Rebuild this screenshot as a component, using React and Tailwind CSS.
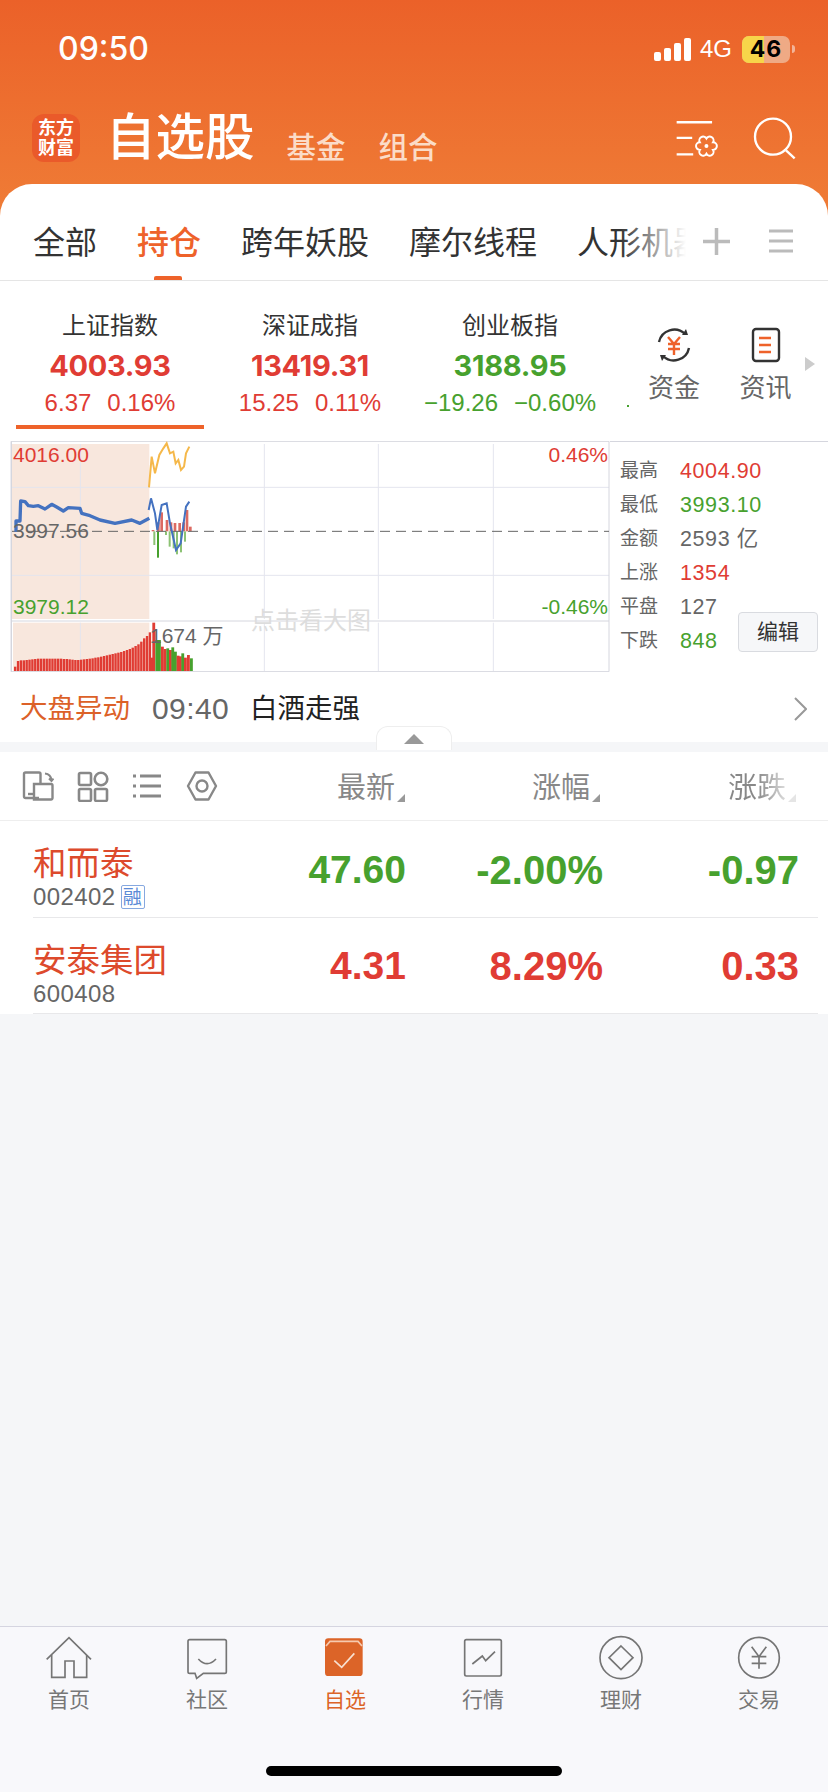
const RED = "text-[#e03c34]";
const GREEN = "text-[#47a12e]";

const tabs = ["全部", "持仓", "跨年妖股", "摩尔线程", "人形机器人"];

const indexes = [
  { name: "上证指数", value: "4003.93", a: "6.37", b: "0.16%", color: RED, active: true },
  { name: "深证成指", value: "13419.31", a: "15.25", b: "0.11%", color: RED },
  { name: "创业板指", value: "3188.95", a: "−19.26", b: "−0.60%", color: GREEN },
];

const stats = [
  { label: "最高", value: "4004.90", color: RED },
  { label: "最低", value: "3993.10", color: GREEN },
  { label: "金额", value: "2593 亿", color: "text-[#666]" },
  { label: "上涨", value: "1354", color: RED },
  { label: "平盘", value: "127", color: "text-[#666]" },
  { label: "下跌", value: "848", color: GREEN },
];

const stocks = [
  { name: "和而泰", code: "002402", tag: true, price: "47.60", pct: "-2.00%", diff: "-0.97", color: GREEN },
  { name: "安泰集团", code: "600408", price: "4.31", pct: "8.29%", diff: "0.33", color: RED },
];

// 图表坐标都是 3 倍的
const bluePre = "48,290 48,258 60,258 62,198 75,200 85,212 100,214 115,212 135,222 155,208 170,216 190,228 205,218 240,220 245,235 270,242 300,255 345,265 395,255 420,265 448,250";
const blueNow = "446,225 453,190 465,235 472,285 485,210 500,205 510,265 528,345 542,325 558,215 568,200";
const yellow = "447,157 455,65 465,115 478,60 490,40 500,25 510,55 520,50 527,85 535,75 543,105 552,95 558,55 568,35";

const upBars = [[458, 285], [474, 262], [484, 232], [500, 255], [512, 262], [524, 264], [538, 264], [550, 262], [560, 225], [570, 275]];
const downBars = [[462, 330], [473, 368], [497, 300], [508, 335], [520, 340], [530, 358], [542, 352], [554, 320]];

const volPre = [695, 678, 676, 676, 675, 674, 673, 672, 671, 671, 671, 671, 671, 671, 671, 671, 671, 672, 672, 673, 674, 675, 675, 674, 673, 672, 671, 670, 668, 667, 665, 663, 661, 659, 657, 655, 653, 651, 648, 645, 642, 638, 633, 628, 620, 610, 603, 592];
const volNow = [
  [452, 668, "#e03c34"], [457, 563, "#e03c34"], [466, 615, "#47a12e"], [474, 615, "#47a12e"], [483, 635, "#e03c34"],
  [491, 642, "#e03c34"], [499, 640, "#47a12e"], [507, 645, "#e03c34"], [514, 637, "#47a12e"], [522, 650, "#47a12e"],
  [530, 662, "#e03c34"], [537, 664, "#e03c34"], [544, 655, "#47a12e"], [552, 668, "#e03c34"], [561, 660, "#e03c34"], [570, 670, "#47a12e"],
];

function Chart() {
  return (
    <svg className="block w-[610px] h-[231px]" viewBox="0 18 1830 693">
      <rect x="36" y="27" width="412" height="525" fill="#f8e7dd" />
      <rect x="39" y="563" width="409" height="145" fill="#f8e7dd" />
      <g stroke="#e4e5ee" strokeWidth="3">
        <path d="M36 157H1827M36 421H1827" />
        <path d="M241 27V552M793 27V552M1135 27V552M1480 27V552" />
        <path d="M241 563V708M793 563V708M1135 563V708M1480 563V708" />
      </g>
      <g stroke="#d5d6de" strokeWidth="3" fill="none">
        <path d="M34 19H1827V710H34ZM34 558H1827" />
      </g>
      <path d="M34 19V710" stroke="#d5d6de" strokeWidth="4" />
      {upBars.map(([x, y]) => (
        <rect key={x} x={x - 3} y={y} width="8" height={289 - y} fill="#dc6a62" />
      ))}
      {downBars.map(([x, y]) => (
        <rect key={x} x={x - 2} y="289" width="6" height={y - 289} fill={x === 473 ? "#47a12e" : "#8cc274"} />
      ))}
      <path d="M36 289H1827" stroke="#666" strokeWidth="3" strokeDasharray="30 18" />
      <polyline points={yellow} fill="none" stroke="#f5b84a" strokeWidth="6" />
      <polyline points={bluePre} fill="none" stroke="#4472c0" strokeWidth="10" strokeLinejoin="round" />
      <polyline points={blueNow} fill="none" stroke="#4472c0" strokeWidth="6" />
      {volPre.map((y, i) => (
        <rect key={i} x={42 + i * 8.6} y={y} width="7.2" height={708 - y} fill="#e03c34" />
      ))}
      {volNow.map(([x, y, c]) => (
        <rect key={x} x={x} y={y} width="8.5" height={708 - y} fill={c} />
      ))}
    </svg>
  );
}

function SettingIcon() {
  return (
    <svg className="w-[48px] h-[42px]" viewBox="130 290 145 125" fill="none" stroke="#fff" strokeWidth="7">
      <path d="M138 305H245M138 352H185M138 402H188" />
      <path
        strokeWidth="6"
        d="M228 354A11 11 0 0 1 248 365.500A11 11 0 0 1 248 388.500A11 11 0 0 1 228 400A11 11 0 0 1 208 388.500A11 11 0 0 1 208 365.500A11 11 0 0 1 228 354Z"
      />
      <circle cx="228" cy="377" r="6" fill="#fff" stroke="none" />
    </svg>
  );
}

function SearchIcon() {
  return (
    <svg className="w-[45px] h-[45px]" viewBox="360 285 135 135" fill="none" stroke="#fff" strokeWidth="7">
      <circle cx="423" cy="347" r="54" />
      <path d="M462 388L488 412" />
    </svg>
  );
}

function FundIcon() {
  return (
    <svg className="w-[40px] h-[40px]" viewBox="0 0 40 40" fill="none">
      <path d="M5 17A15.5 15.5 0 0 1 31 9" stroke="#333" strokeWidth="2.4" />
      <path d="M35 23A15.5 15.5 0 0 1 9 31" stroke="#333" strokeWidth="2.4" />
      <path d="M28 10L34 10L32 4Z" fill="#333" />
      <path d="M12 30L6 30L8 36Z" fill="#333" />
      <path d="M14 12L20 19L26 12M14 19H26M14 24H26M20 19V30" stroke="#ee622a" strokeWidth="2.4" />
    </svg>
  );
}

function NewsIcon() {
  return (
    <svg className="w-[40px] h-[40px]" viewBox="0 0 40 40" fill="none">
      <rect x="7" y="4" width="26" height="32" rx="3" stroke="#333" strokeWidth="2.4" />
      <path d="M13 13H25M13 20H25M13 27H25" stroke="#ee622a" strokeWidth="2.6" />
    </svg>
  );
}

function ToolIcons() {
  return (
    <div className="w-[288px] flex items-center gap-[23px] text-[#888]">
      <svg className="w-[32px] h-[32px]" viewBox="0 0 32 32" fill="none" stroke="currentColor" strokeWidth="2.4">
        <path d="M17 28H3.500A1.500 1.500 0 0 1 2 26.500V4A1.500 1.500 0 0 1 3.500 2.500H17A1.500 1.500 0 0 1 18.500 4V14" />
        <path d="M6 24H12" />
        <path d="M12 14H29A1.500 1.500 0 0 1 30.500 15.500V28A1.500 1.500 0 0 1 29 29.500H12Z" />
        <path d="M23 3.500C27 4 29 6 29.500 10M27 8.500L29.500 11L31.500 8.500" strokeWidth="2" />
      </svg>
      <svg className="w-[32px] h-[32px]" viewBox="0 0 32 32" fill="none" stroke="currentColor" strokeWidth="2.6">
        <rect x="2" y="3" width="12" height="12" rx="1.500" />
        <circle cx="24" cy="9" r="6.300" />
        <rect x="2" y="19" width="12" height="12" rx="1.500" />
        <rect x="18" y="19" width="12" height="12" rx="1.500" />
      </svg>
      <svg className="w-[30px] h-[32px]" viewBox="0 0 30 32" fill="none" stroke="currentColor" strokeWidth="3">
        <path d="M8 6H29M8 16H29M8 26H29" />
        <path d="M1 6H4M1 16H4M1 26H4" />
      </svg>
      <svg className="ml-[1px] w-[32px] h-[32px]" viewBox="0 0 32 32" fill="none" stroke="currentColor" strokeWidth="2.4">
        <path d="M9.500 2.500H22.500L30 16L22.500 29.500H9.500L2 16Z" strokeLinejoin="round" />
        <circle cx="16" cy="16" r="5.500" />
      </svg>
    </div>
  );
}

function NavIcon({ type }) {
  if (type === "home")
    return (
      <svg className="w-[48px] h-[48px]" viewBox="135 75 144 144" fill="none" stroke="#757575" strokeWidth="5">
        <path d="M140 148L207 83L273 148" />
        <path d="M155 135V202H195V153H222V202H260V135" />
      </svg>
    );
  if (type === "chat")
    return (
      <svg className="w-[48px] h-[48px]" viewBox="549 75 144 144" fill="none" stroke="#757575" strokeWidth="5">
        <path d="M569 89H674A5 5 0 0 1 679 94V185A5 5 0 0 1 674 190H610L590 205L585 190H569A5 5 0 0 1 564 185V94A5 5 0 0 1 569 89Z" />
        <path d="M595 147Q621 175 648 147" />
      </svg>
    );
  if (type === "star")
    return (
      <svg className="w-[48px] h-[48px]" viewBox="963 75 144 144" fill="none">
        <rect x="975" y="85" width="113" height="113" rx="10" fill="#dc6428" />
        <path d="M978 108L990 94H1074L1086 108" stroke="#f6c9ae" strokeWidth="5" />
        <path d="M1003 152L1025 172L1063 130" stroke="#f8e0d0" strokeWidth="5" />
      </svg>
    );
  if (type === "market")
    return (
      <svg className="w-[48px] h-[48px]" viewBox="135 75 144 144" fill="none" stroke="#757575" strokeWidth="5">
        <rect x="152" y="89" width="110" height="109" rx="5" />
        <path d="M175 162L205 138L215 152L243 125" />
      </svg>
    );
  if (type === "wealth")
    return (
      <svg className="w-[48px] h-[48px]" viewBox="549 75 144 144" fill="none" stroke="#757575" strokeWidth="5">
        <circle cx="621" cy="143" r="63" />
        <path d="M621 108L657 143L621 179L585 143Z" />
      </svg>
    );
  return (
    <svg className="w-[48px] h-[48px]" viewBox="960 75 144 144" fill="none" stroke="#757575" strokeWidth="5">
      <circle cx="1032" cy="143" r="61" />
      <path d="M1010 110L1032 140L1054 110M1010 140H1054M1010 160H1054M1032 140V176" />
    </svg>
  );
}

const navItems = [
  { type: "home", label: "首页" },
  { type: "chat", label: "社区" },
  { type: "star", label: "自选", active: true },
  { type: "market", label: "行情" },
  { type: "wealth", label: "理财" },
  { type: "trade", label: "交易" },
];

export default function App() {
  return (
    <div className="relative w-[828px] h-[1792px] flex flex-col bg-[#f5f6f8] overflow-hidden font-['Liberation_Sans','Noto_Sans_CJK_SC',sans-serif]">
      {/* 顶部橙色 */}
      <div className="h-[216px] shrink-0 bg-gradient-to-b from-[#eb6129] to-[#ef7c36] text-white">
        <div className="h-[98px] flex items-center pl-[58px] pr-[33px]">
          <span className="font-['Inter'] text-[32px] font-medium">09:50</span>
          <div className="ml-auto flex items-center">
            <div className="flex items-end gap-[3px] h-[23px]">
              <div className="w-[7px] h-[9px] rounded-[2px] bg-white" />
              <div className="w-[7px] h-[13px] rounded-[2px] bg-white" />
              <div className="w-[7px] h-[18px] rounded-[2px] bg-white" />
              <div className="w-[7px] h-[23px] rounded-[2px] bg-white" />
            </div>
            <span className="ml-[9px] text-[24px] leading-none">4G</span>
            <div className="relative ml-[10px] w-[48px] h-[27px] rounded-[7px] overflow-hidden bg-[#efaa85] flex items-center justify-center">
              <div className="absolute left-0 top-0 bottom-0 w-[22px] bg-[#f7d54a]" />
              <span className="relative font-['Inter'] text-[23px] font-bold text-black tracking-[1px]">46</span>
            </div>
            <div className="ml-[2px] w-[3px] h-[8px] rounded-r-full bg-[#f3b498]" />
          </div>
        </div>
        <div className="h-[80px] flex items-center pl-[32px] pr-[31px]">
          <div className="w-[48px] h-[48px] rounded-[12px] bg-[#ea5a2a] flex flex-col items-center justify-center text-[18px] leading-[20px] font-bold">
            <span>东方</span>
            <span>财富</span>
          </div>
          <span className="ml-[26px] text-[49.500px] leading-none font-medium">自选股</span>
          <span className="ml-[32px] mt-[20px] text-[29.500px] leading-none font-medium text-[#fbdcc8]">基金</span>
          <span className="ml-[33px] mt-[20px] text-[29.500px] leading-none font-medium text-[#fbdcc8]">组合</span>
          <div className="ml-auto flex items-center gap-[30px]">
            <SettingIcon />
            <SearchIcon />
          </div>
        </div>
      </div>

      {/* 白色内容 */}
      <div className="-mt-[32px] rounded-t-[32px] bg-white">
        <div className="relative h-[97px] pt-[18px] flex items-center border-b border-[#e5e5e5]">
          <div className="relative ml-[33px] mt-[3px] w-[653px] overflow-hidden flex gap-[40px] text-[32px] text-[#333] whitespace-nowrap">
            {tabs.map((t) => (
              <span key={t} className={t === "持仓" ? "font-medium text-[#ee622a]" : ""}>
                {t}
              </span>
            ))}
            <div className="absolute right-0 top-0 bottom-0 w-[66px] bg-gradient-to-r from-white/0 to-white" />
          </div>
          <svg className="ml-[17px] w-[27px] h-[27px]" viewBox="0 0 27 27" stroke="#bbb" strokeWidth="3.500">
            <path d="M0 13.500H27M13.500 0V27" />
          </svg>
          <svg className="ml-[39px] w-[24px] h-[24px]" viewBox="0 0 24 24" stroke="#bbb" strokeWidth="3">
            <path d="M0 2H24M0 12H24M0 22H24" />
          </svg>
          <div className="absolute left-[154px] bottom-0 w-[28px] h-[4px] rounded-t-[2px] bg-[#ee622a]" />
        </div>

        {/* 指数 */}
        <div className="h-[160px] flex pl-[10px]">
          {indexes.map((it) => (
            <div key={it.name} className="w-[200px] flex flex-col items-center pt-[29px] whitespace-nowrap">
              <span className="text-[24px] leading-[32px] text-[#333]">{it.name}</span>
              <span className={`mt-[4px] font-['Inter'] text-[29px] tracking-[-0.3px] leading-[40px] font-bold ${it.color}`}>{it.value}</span>
              <div className={`mt-[2px] flex gap-[16px] text-[24px] leading-[30px] ${it.color}`}>
                <span>{it.a}</span>
                <span>{it.b}</span>
              </div>
              <div className={`mt-[7px] w-[188px] h-[4px] ${it.active ? "bg-[#ee622a]" : ""}`} />
            </div>
          ))}
          <div className="relative flex pl-[18px] pt-[44px]">
            <div className="absolute left-[17px] top-[124px] w-[2px] h-[2px] bg-[#47a12e]" />
            <div className="w-[92px] flex flex-col items-center">
              <FundIcon />
              <span className="mt-[5px] text-[26px] leading-[36px] text-[#666]">资金</span>
            </div>
            <div className="w-[91px] flex flex-col items-center">
              <NewsIcon />
              <span className="mt-[5px] text-[26px] leading-[36px] text-[#666]">资讯</span>
            </div>
            <div className="-ml-[6px] mt-[32px] w-0 h-0 border-y-[7px] border-y-transparent border-l-[10px] border-l-[#ccc]" />
          </div>
        </div>

        {/* 分时图 */}
        <div className="h-[231px] flex">
          <div className="relative w-[610px] shrink-0 text-[21px] leading-[26px]">
            <Chart />
            <span className={`absolute left-[13px] top-[1px] ${RED}`}>4016.00</span>
            <span className="absolute left-[13px] top-[77px] text-[#666]">3997.56</span>
            <span className={`absolute left-[13px] top-[153px] ${GREEN}`}>3979.12</span>
            <span className={`absolute right-[2px] top-[1px] ${RED}`}>0.46%</span>
            <span className={`absolute right-[2px] top-[153px] ${GREEN}`}>-0.46%</span>
            <span className="absolute left-[251px] top-[167px] text-[24px] leading-[26px] text-[#ddd]">点击看大图</span>
            <span className="absolute left-[150px] top-[182px] text-[#666]">1674 万</span>
          </div>
          <div className="relative flex-1 border-t border-[#d5d6de] pl-[10px] pt-[12px]">
            {stats.map((s) => (
              <div key={s.label} className="h-[34px] flex items-center">
                <span className="w-[60px] text-[19px] text-[#666]">{s.label}</span>
                <span className={`text-[21.500px] tracking-[0.6px] ${s.color}`}>{s.value}</span>
              </div>
            ))}
            <div className="absolute right-[10px] bottom-[20px] w-[80px] h-[40px] flex items-center justify-center rounded-[4px] border border-[#d9dbe0] bg-[#f6f7f9] text-[21px] text-[#333]">
              编辑
            </div>
          </div>
        </div>

        {/* 大盘异动 */}
        <div className="h-[70px] flex items-center pt-[3px] pl-[20px] pr-[21px] whitespace-nowrap">
          <span className="text-[27.500px] text-[#dc6128]">大盘异动</span>
          <span className="ml-[22px] text-[30px] tracking-[0.4px] text-[#666]">09:40</span>
          <span className="ml-[21px] text-[27.500px] text-[#222]">白酒走强</span>
          <svg className="ml-auto w-[13px] h-[24px]" viewBox="0 0 13 24" fill="none" stroke="#999" strokeWidth="2">
            <path d="M1 1L12 12L1 23" />
          </svg>
        </div>
      </div>

      {/* 分隔条 */}
      <div className="relative h-[10px] shrink-0 bg-[#f5f6f8]">
        <div className="absolute left-[376px] -top-[16px] w-[76px] h-[24px] rounded-t-[12px] border-x border-t border-[#eee] bg-white flex justify-center pt-[7px]">
          <div className="w-0 h-0 border-x-[10px] border-x-transparent border-b-[10px] border-b-[#999]" />
        </div>
      </div>

      {/* 列表表头 */}
      <div className="h-[69px] shrink-0 bg-white flex items-center pl-[22px] border-b border-[#eee]">
        <ToolIcons />
        <div className="w-[96px] relative text-right pt-[6px] pr-[11px] text-[29px] text-[#888]">
          最新
          <div className="absolute right-[1px] bottom-[9px] w-0 h-0 border-l-[8px] border-l-transparent border-b-[8px] border-b-[#999]" />
        </div>
        <div className="w-[195px] relative text-right pt-[6px] pr-[11px] text-[29px] text-[#888]">
          涨幅
          <div className="absolute right-[1px] bottom-[9px] w-0 h-0 border-l-[8px] border-l-transparent border-b-[8px] border-b-[#999]" />
        </div>
        <div className="w-[196px] relative flex justify-end pt-[6px] pr-[11px] text-[29px]">
          <span className="bg-gradient-to-r from-[#888] via-[#888] to-[#ddd] bg-clip-text text-transparent">涨跌</span>
          <div className="absolute right-[1px] bottom-[9px] w-0 h-0 border-l-[8px] border-l-transparent border-b-[8px] border-b-[#e5e5e5]" />
        </div>
      </div>

      {/* 股票列表 */}
      <div className="shrink-0 bg-white">
        {stocks.map((s) => (
          <div key={s.code} className="ml-[33px] mr-[10px] h-[96.500px] flex items-center border-b border-[#e8e8ea]">
            <div className="w-[277px] self-start pt-[23px]">
              <div className="text-[33.500px] leading-[40px] text-[#dd4a2c]">{s.name}</div>
              <div className="-mt-[1px] flex items-center gap-[5px] text-[24px] tracking-[0.4px] leading-[28px] text-[#666]">
                {s.code}
                {s.tag && (
                  <span className="w-[24px] h-[24px] flex items-center justify-center rounded-[2px] border border-[#86a8e0] text-[19px] leading-none text-[#5b8ad6]">
                    融
                  </span>
                )}
              </div>
            </div>
            <div className={`w-[96px] pt-[2px] flex justify-end text-[39px] font-bold ${s.color}`}>{s.price}</div>
            <div className={`w-[197px] pt-[2px] flex justify-end text-[40px] font-bold ${s.color}`}>{s.pct}</div>
            <div className={`w-[196px] pt-[2px] flex justify-end text-[40px] font-bold ${s.color}`}>{s.diff}</div>
          </div>
        ))}
      </div>

      <div className="flex-1" />

      {/* 底部导航 */}
      <div className="h-[166px] shrink-0 border-t border-[#d5d5e0] bg-[#f8f8fb] pt-[8px]">
        <div className="grid grid-cols-6">
          {navItems.map((n) => (
            <div key={n.type} className="flex flex-col items-center">
              <NavIcon type={n.type} />
              <span className={`mt-[4px] text-[21px] leading-[26px] ${n.active ? "text-[#dc6428]" : "text-[#777]"}`}>
                {n.label}
              </span>
            </div>
          ))}
        </div>
        <div className="mt-[53px] mx-auto w-[296px] h-[10px] rounded-full bg-black" />
      </div>
    </div>
  );
}
